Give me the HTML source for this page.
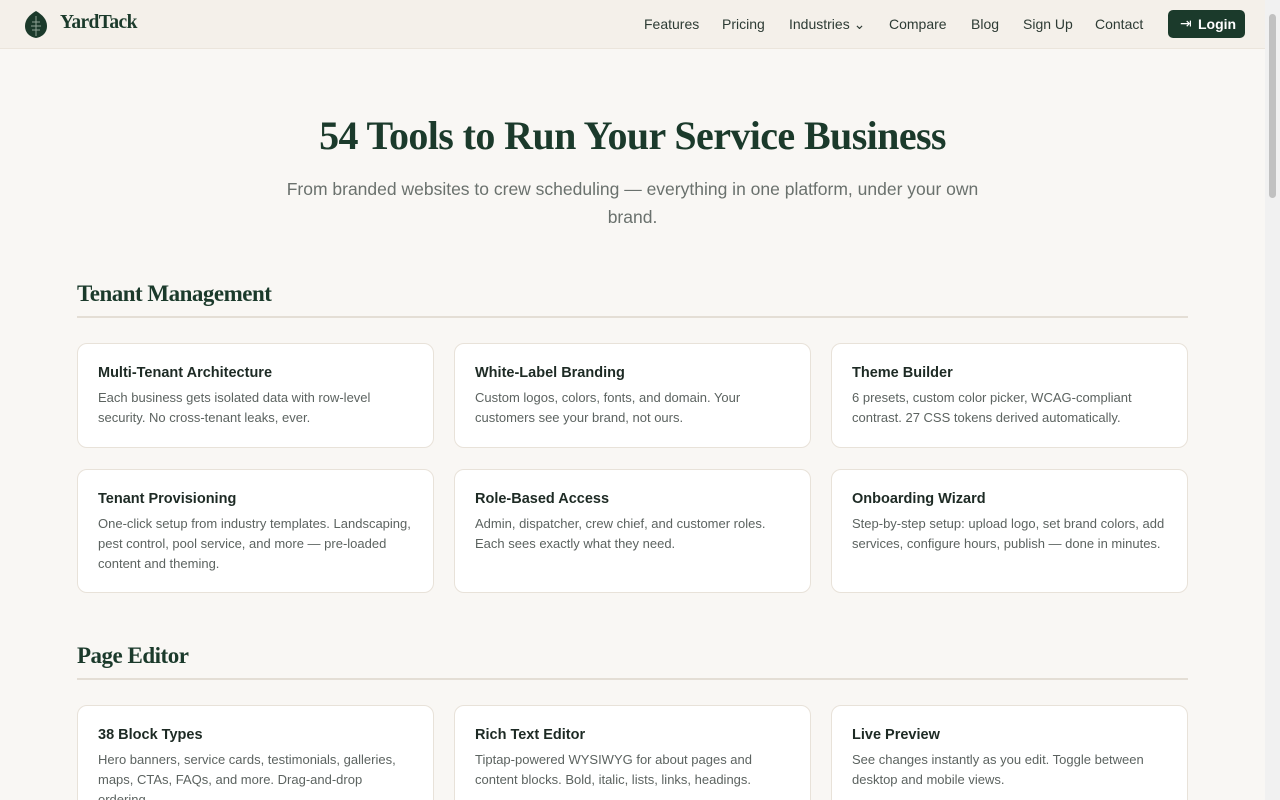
<!DOCTYPE html>
<html><head><meta charset="utf-8"><style>
*{box-sizing:border-box;margin:0;padding:0}
html,body{width:1280px;height:800px;overflow:hidden}
body{background:#f9f7f4;font-family:"Liberation Sans",sans-serif;color:#1d3a2c;position:relative}
.sb{position:absolute;right:0;top:0;width:15px;height:800px;background:#f1f1f1}
.sb div{position:absolute;left:4px;top:14px;width:7px;height:184px;background:#c1c1c1;border-radius:4px}
header{position:absolute;left:0;top:0;width:1265px;height:49px;background:#f4f0ea;border-bottom:1px solid #ebe5dc}
.logo{position:absolute;left:25px;top:11px}
.brand{position:absolute;left:60px;top:12px;font-family:"Liberation Serif",serif;font-weight:bold;font-size:19.5px;color:#1b3a2b;letter-spacing:-0.6px}
nav a{position:absolute;top:16px;font-size:14px;color:#2d3b34;text-decoration:none}
.login{position:absolute;left:1168px;top:10px;width:77px;height:28px;background:#1b3a2b;border-radius:5px;color:#fff;font-size:14px;font-weight:bold;padding:6px 0 0 30px}
h1{position:absolute;left:0;width:1265px;top:112px;text-align:center;font-family:"Liberation Serif",serif;font-size:40px;font-weight:bold;color:#1b3a2b;letter-spacing:-0.6px}
.sub{position:absolute;left:270px;width:725px;top:175px;text-align:center;font-size:17.5px;line-height:28px;color:#6a716d}
h2{position:absolute;left:77px;font-family:"Liberation Serif",serif;font-size:23px;font-weight:bold;color:#1b3a2b;letter-spacing:-0.5px}
.rule{position:absolute;left:77px;width:1111px;height:2px;background:#e4ded5}
.card{position:absolute;width:357px;background:#fff;border:1px solid #e8e2d9;border-radius:10px;padding:20px 20px}
.card h3{font-size:14.5px;font-weight:bold;color:#1d2a24;margin-top:1px;margin-bottom:7px}
.card p{font-size:13px;line-height:20px;color:#5c6360}
</style></head><body>
<header>
<svg class="logo" width="22" height="27" viewBox="0 0 22 27"><path d="M11 0C4 4 0 9 0 15c0 7 5 11 11 12c6-1 11-5 11-12C22 9 18 4 11 0z" fill="#1b3a2b"/><path d="M11 5v20M7 11h8M6 15h10M7 19h8" stroke="#8fa396" stroke-width="1"/></svg>
<div class="brand">YardTack</div>
<nav><a style="left:644px">Features</a><a style="left:722px">Pricing</a><a style="left:789px">Industries ⌄</a><a style="left:889px">Compare</a><a style="left:971px">Blog</a><a style="left:1023px">Sign Up</a><a style="left:1095px">Contact</a></nav>
<div class="login"><span style="position:absolute;left:12px;top:5px;font-weight:normal">⇥</span>Login</div>
</header>
<h1>54 Tools to Run Your Service Business</h1>
<div class="sub">From branded websites to crew scheduling — everything in one platform, under your own brand.</div>
<h2 style="top:281px">Tenant Management</h2><div class="rule" style="top:316px"></div>
<div class="card" style="left:77px;top:343px;height:105px"><h3>Multi-Tenant Architecture</h3><p>Each business gets isolated data with row-level security. No cross-tenant leaks, ever.</p></div>
<div class="card" style="left:454px;top:343px;height:105px"><h3>White-Label Branding</h3><p>Custom logos, colors, fonts, and domain. Your customers see your brand, not ours.</p></div>
<div class="card" style="left:831px;top:343px;height:105px"><h3>Theme Builder</h3><p>6 presets, custom color picker, WCAG-compliant contrast. 27 CSS tokens derived automatically.</p></div>
<div class="card" style="left:77px;top:469px;height:124px"><h3>Tenant Provisioning</h3><p>One-click setup from industry templates. Landscaping, pest control, pool service, and more — pre-loaded content and theming.</p></div>
<div class="card" style="left:454px;top:469px;height:124px"><h3>Role-Based Access</h3><p>Admin, dispatcher, crew chief, and customer roles. Each sees exactly what they need.</p></div>
<div class="card" style="left:831px;top:469px;height:124px"><h3>Onboarding Wizard</h3><p>Step-by-step setup: upload logo, set brand colors, add services, configure hours, publish — done in minutes.</p></div>
<h2 style="top:643px">Page Editor</h2><div class="rule" style="top:678px"></div>
<div class="card" style="left:77px;top:705px;height:130px"><h3>38 Block Types</h3><p>Hero banners, service cards, testimonials, galleries, maps, CTAs, FAQs, and more. Drag-and-drop ordering.</p></div>
<div class="card" style="left:454px;top:705px;height:130px"><h3>Rich Text Editor</h3><p>Tiptap-powered WYSIWYG for about pages and content blocks. Bold, italic, lists, links, headings.</p></div>
<div class="card" style="left:831px;top:705px;height:130px"><h3>Live Preview</h3><p>See changes instantly as you edit. Toggle between desktop and mobile views.</p></div>
<div class="sb"><div></div></div>
</body></html>
